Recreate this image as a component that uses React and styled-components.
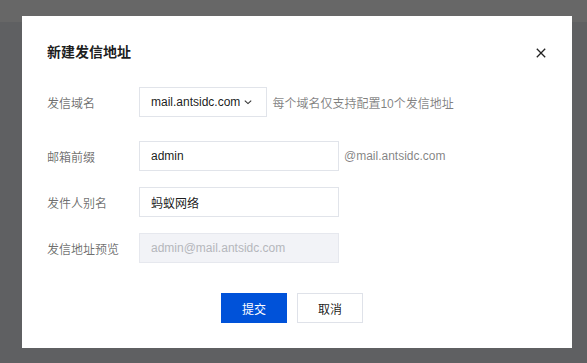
import React from "react";
import styled, { createGlobalStyle } from "styled-components";

const Global = createGlobalStyle`
  html, body { margin: 0; padding: 0; }
  body {
    font-family: "Liberation Sans", "Noto Sans CJK SC", Arial, sans-serif;
    background: #5f6062;
  }
`;

const Page = styled.div`
  width: 587px;
  height: 363px;
  display: flex;
  flex-direction: column;
  overflow: hidden;
  background: #5f6062;
`;

const TopBar = styled.div`
  height: 22px;
  flex: none;
  background: #676767;
`;

const Stage = styled.div`
  flex: 1;
  display: flex;
  align-items: flex-start;
  padding-left: 22px;
  margin-top: -6px;
`;

const Dialog = styled.div`
  width: 550px;
  height: 332px;
  background: #fff;
  box-sizing: border-box;
  padding: 25px 24px 25px 24px;
  display: flex;
  flex-direction: column;
`;

const Header = styled.div`
  display: flex;
  align-items: center;
  justify-content: space-between;
  height: 22px;
`;

const Title = styled.h2`
  margin: 0;
  font-size: 14px;
  font-weight: 600;
  line-height: 22px;
  color: rgba(0, 0, 0, 0.9);
  padding-left: 1px;
`;

const Close = styled.button`
  border: 0;
  background: none;
  padding: 0;
  width: 16px;
  height: 16px;
  display: flex;
  align-items: center;
  justify-content: center;
  margin: 2px -1px 0 0;
  cursor: pointer;
`;

const Form = styled.div`
  display: flex;
  flex-direction: column;
  margin-top: 24px;
`;

const Row = styled.div`
  display: flex;
  align-items: center;
  height: 30px;
  margin-bottom: ${(p) => p.$gap}px;
`;

const Label = styled.div`
  width: 92px;
  flex: none;
  font-size: 12px;
  color: rgba(0, 0, 0, 0.58);
  padding-left: 1px;
`;

const Select = styled.div`
  height: 30px;
  box-sizing: border-box;
  border: 1px solid #e1e4ea;
  display: flex;
  align-items: center;
  padding: 0 13px 0 11px;
  gap: 3px;
  font-size: 12px;
  color: rgba(0, 0, 0, 0.9);
`;

const Input = styled.div`
  width: 200px;
  height: 30px;
  box-sizing: border-box;
  border: 1px solid ${(p) => (p.$disabled ? "#e6e8ee" : "#e1e4ea")};
  background: ${(p) => (p.$disabled ? "#f2f3f7" : "#fff")};
  display: flex;
  align-items: center;
  padding: 0 11px;
  font-size: 12px;
  color: ${(p) => (p.$disabled ? "#b5b7bc" : "rgba(0,0,0,0.9)")};
`;

const Hint = styled.span`
  font-size: 12px;
  color: rgba(0, 0, 0, 0.5);
  margin-left: ${(p) => p.$ml}px;
`;

const Footer = styled.div`
  display: flex;
  justify-content: center;
  gap: 10px;
  margin-top: 30px;
  padding-right: 10px;
`;

const Button = styled.button`
  width: 66px;
  height: 30px;
  box-sizing: border-box;
  font-family: inherit;
  font-size: 12px;
  border: 1px solid ${(p) => (p.$primary ? "#0052d9" : "#dfe2e9")};
  background: ${(p) => (p.$primary ? "#0052d9" : "#fff")};
  color: ${(p) => (p.$primary ? "#fff" : "rgba(0,0,0,0.9)")};
  padding: 0;
  cursor: pointer;
`;

const Chevron = () => (
  <svg width="10" height="10" viewBox="0 0 10 10">
    <path d="M1.8 3.6 L5 6.6 L8.2 3.6" fill="none" stroke="#333" strokeWidth="1.1" />
  </svg>
);

const XIcon = () => (
  <svg width="10" height="10" viewBox="0 0 10 10">
    <path d="M0.8 0.8 L9.2 9.2 M9.2 0.8 L0.8 9.2" stroke="#222" strokeWidth="1.3" />
  </svg>
);

export default function App() {
  return (
    <>
      <Global />
      <Page>
        <TopBar />
        <Stage>
          <Dialog>
            <Header>
              <Title>新建发信地址</Title>
              <Close aria-label="close">
                <XIcon />
              </Close>
            </Header>
            <Form>
              <Row $gap={24}>
                <Label>发信域名</Label>
                <Select>
                  mail.antsidc.com
                  <Chevron />
                </Select>
                <Hint $ml={5}>每个域名仅支持配置10个发信地址</Hint>
              </Row>
              <Row $gap={16}>
                <Label>邮箱前缀</Label>
                <Input>admin</Input>
                <Hint $ml={5}>@mail.antsidc.com</Hint>
              </Row>
              <Row $gap={16}>
                <Label>发件人别名</Label>
                <Input>蚂蚁网络</Input>
              </Row>
              <Row $gap={0}>
                <Label>发信地址预览</Label>
                <Input $disabled>admin@mail.antsidc.com</Input>
              </Row>
            </Form>
            <Footer>
              <Button $primary>提交</Button>
              <Button>取消</Button>
            </Footer>
          </Dialog>
        </Stage>
      </Page>
    </>
  );
}
